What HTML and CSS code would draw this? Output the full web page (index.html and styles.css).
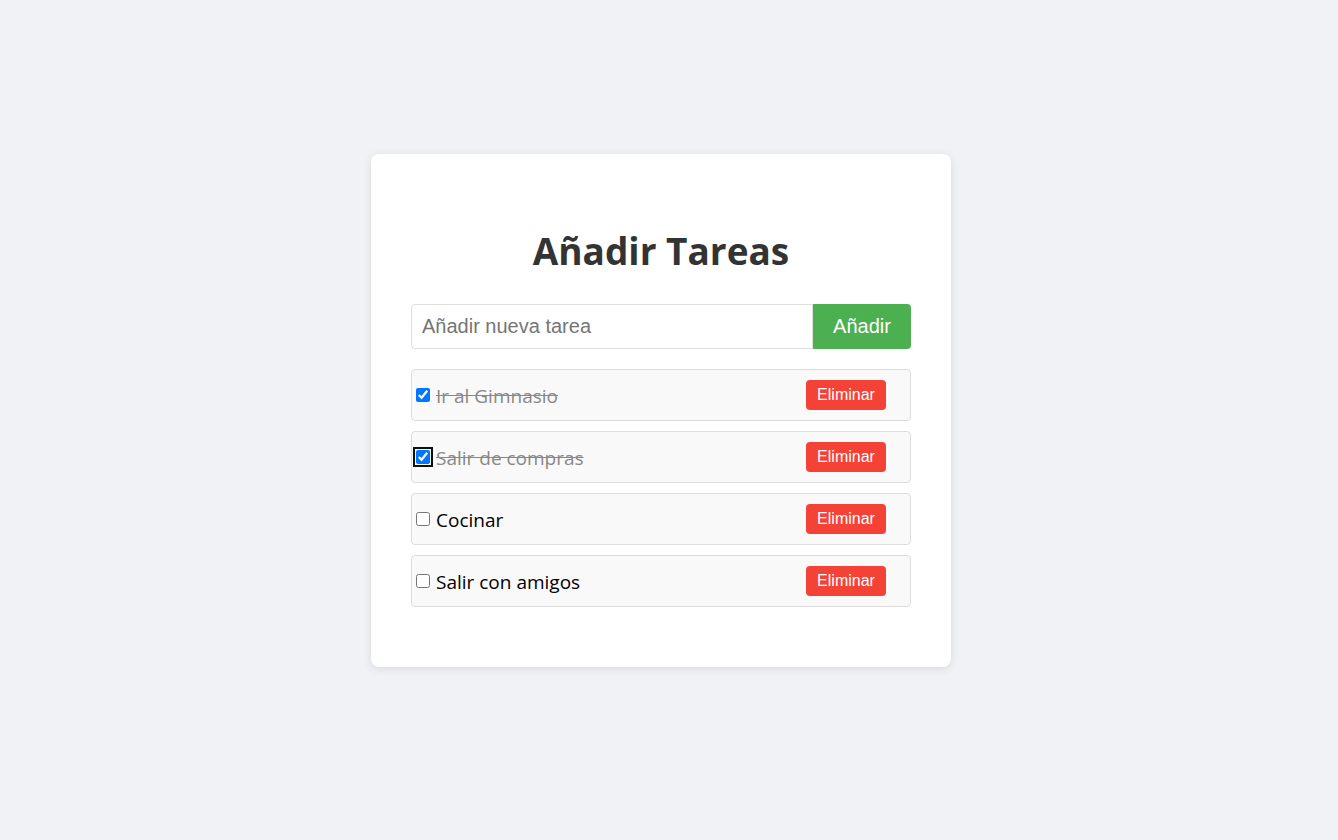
FILE: index.html
```html
<!DOCTYPE html>
<html lang="es">
<head>
<meta charset="utf-8">
<title>Añadir Tareas</title>
<link rel="stylesheet" href="styles.css">
</head>
<body>
<main class="card">
  <h1 class="title">Añadir Tareas</h1>
  <form class="add-form">
    <input class="add-input" type="text" placeholder="Añadir nueva tarea">
    <button class="add-btn" type="button">Añadir</button>
  </form>
  <ul class="task-list">
    <li class="task done"><input type="checkbox" class="task-check" checked><span class="task-text">Ir al Gimnasio</span><button class="del-btn" type="button">Eliminar</button></li>
    <li class="task done"><input type="checkbox" class="task-check focused" checked><span class="task-text">Salir de compras</span><button class="del-btn" type="button">Eliminar</button></li>
    <li class="task"><input type="checkbox" class="task-check"><span class="task-text">Cocinar</span><button class="del-btn" type="button">Eliminar</button></li>
    <li class="task"><input type="checkbox" class="task-check"><span class="task-text">Salir con amigos</span><button class="del-btn" type="button">Eliminar</button></li>
  </ul>
</main>
</body>
</html>
```

FILE: styles.css
```css
html, body {
  margin: 0;
  padding: 0;
}
body {
  background: #f0f2f5;
  font-family: "Open Sans", "Noto Sans", sans-serif;
  min-height: 840px;
  box-sizing: border-box;
  padding-right: 16px;
  display: flex;
  justify-content: center;
  align-items: flex-start;
}
.card {
  margin-top: 154px;
  width: 500px;
  padding: 40px;
  background: #fff;
  border-radius: 8px;
  box-shadow: 0 2px 10px rgba(0, 0, 0, 0.1);
}
.title {
  margin: 33px 0 29px;
  text-align: center;
  font-size: 37px;
  line-height: 48px;
  font-weight: 700;
  color: #333;
}
.add-form {
  display: flex;
  margin: 0;
}
.add-input {
  flex: 1;
  min-width: 0;
  box-sizing: border-box;
  height: 45px;
  padding: 10px;
  font-family: "Liberation Sans", Arial, sans-serif;
  font-size: 20px;
  border: 1px solid #ddd;
  border-radius: 4px 0 0 4px;
  outline: none;
  color: #333;
}
.add-input::placeholder {
  color: #757575;
}
.add-btn {
  width: 98px;
  height: 45px;
  padding: 0;
  font-family: "Liberation Sans", Arial, sans-serif;
  font-size: 20px;
  color: #fff;
  background: #4caf50;
  border: none;
  border-radius: 0 4px 4px 0;
}
.task-list {
  list-style: none;
  margin: 20px 0 20px;
  padding: 0;
  display: flex;
  flex-direction: column;
  gap: 10px;
}
.task {
  display: flex;
  align-items: center;
  height: 52px;
  box-sizing: border-box;
  background: #f9f9f9;
  border: 1px solid #ddd;
  border-radius: 4px;
  font-size: 19px;
  color: #000;
}
.task-check {
  width: 14px;
  height: 14px;
  margin: 0 6px 0 4px;
}
.task-check.focused {
  outline: 2px solid #101010;
  outline-offset: 1px;
  border-radius: 2px;
}
.task-text {
  flex: 1;
  padding-top: 2px;
}
.done .task-text {
  color: #888;
  text-decoration: line-through;
}
.del-btn {
  margin-right: 24px;
  width: 80px;
  height: 30px;
  padding: 0;
  font-family: "Liberation Sans", Arial, sans-serif;
  font-size: 16px;
  color: #fff;
  background: #f44336;
  border: none;
  border-radius: 4px;
}
```
